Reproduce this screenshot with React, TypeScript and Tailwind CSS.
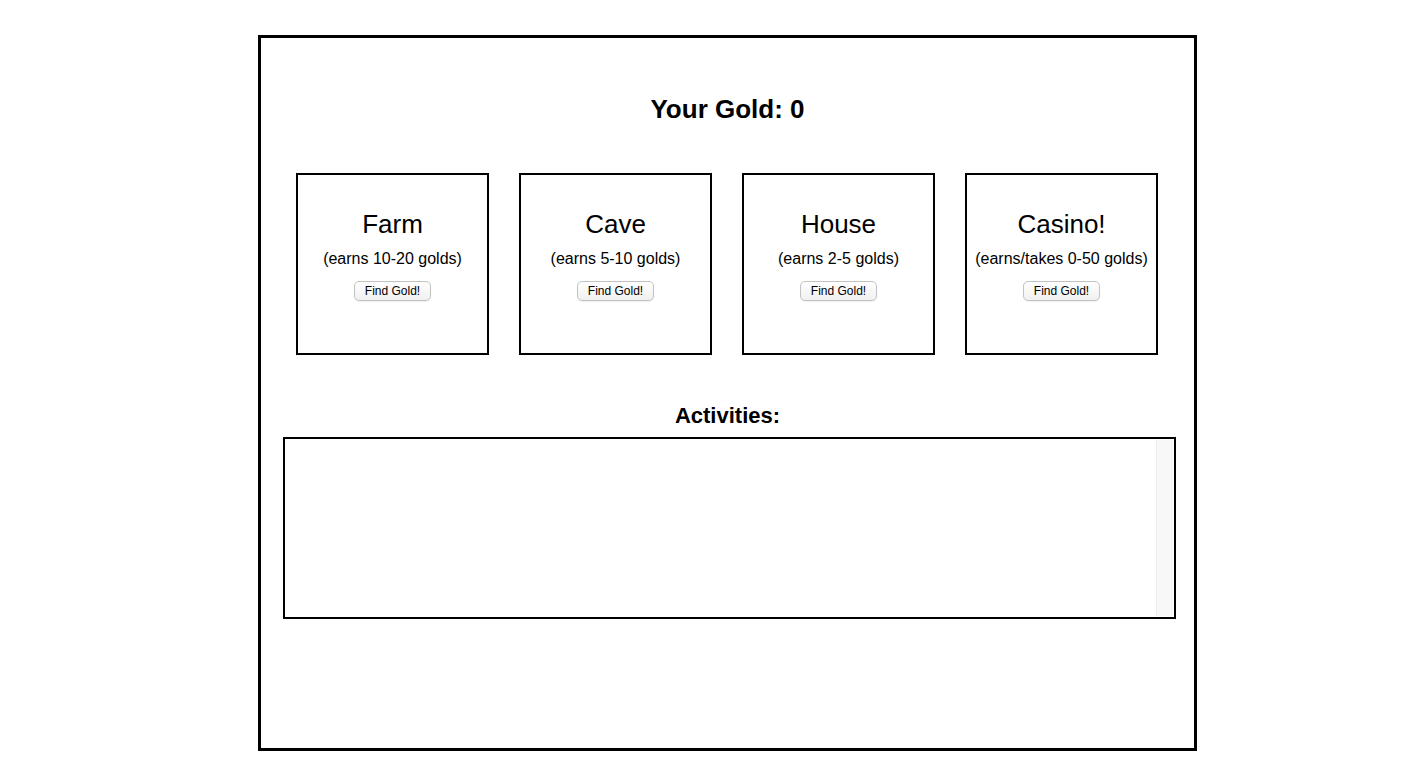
import React, { useState } from 'react';

interface Place {
  name: string;
  note: string;
}

const places: Place[] = [
  { name: 'Farm', note: '(earns 10-20 golds)' },
  { name: 'Cave', note: '(earns 5-10 golds)' },
  { name: 'House', note: '(earns 2-5 golds)' },
  { name: 'Casino!', note: '(earns/takes 0-50 golds)' },
];

function PlaceCard({ place, onFind }: { place: Place; onFind: () => void }) {
  return (
    <div className="w-[193px] h-[182px] border-2 border-black flex flex-col items-center pt-[34px]">
      <div className="text-[26px] leading-[30px]">{place.name}</div>
      <div className="mt-[10px] text-[16px] leading-[20px]">{place.note}</div>
      <button
        onClick={onFind}
        className="mt-[12px] h-[20px] px-[10px] text-[12px] leading-[16px] rounded-[5px] border border-[#c2c2c2] bg-gradient-to-b from-white to-[#f0f0f0] shadow-[0_1px_1px_rgba(0,0,0,0.06)]"
      >
        Find Gold!
      </button>
    </div>
  );
}

export default function App() {
  const [gold, setGold] = useState(0);
  const [log, setLog] = useState<string[]>([]);

  const find = (name: string) => {
    setGold(g => g);
    setLog(l => l);
    void name;
  };

  return (
    <div className="min-h-screen bg-white text-black font-['Liberation_Sans',Arial,sans-serif] pt-[35px] pl-[258px]">
      <div className="w-[939px] h-[716px] border-[3px] border-black">
        <div className="mt-[56px] text-center text-[26px] leading-[30px] font-bold">Your Gold: {gold}</div>

        <div className="mt-[49px] pl-[35px] flex gap-[30px]">
          {places.map(p => (
            <PlaceCard key={p.name} place={p} onFind={() => find(p.name)} />
          ))}
        </div>

        <div className="mt-[48px] text-center text-[22px] leading-[26px] font-bold">Activities:</div>

        <div className="mt-[8px] ml-[22px] w-[893px] h-[182px] border-2 border-black flex">
          <div className="flex-1 px-2 py-1 text-sm">
            {log.map((line, i) => (
              <div key={i}>{line}</div>
            ))}
          </div>
          <div className="w-[17px] mr-[1px] my-[1px] bg-[#f8f8f8] border-l border-[#ececec]" />
        </div>
      </div>
    </div>
  );
}
